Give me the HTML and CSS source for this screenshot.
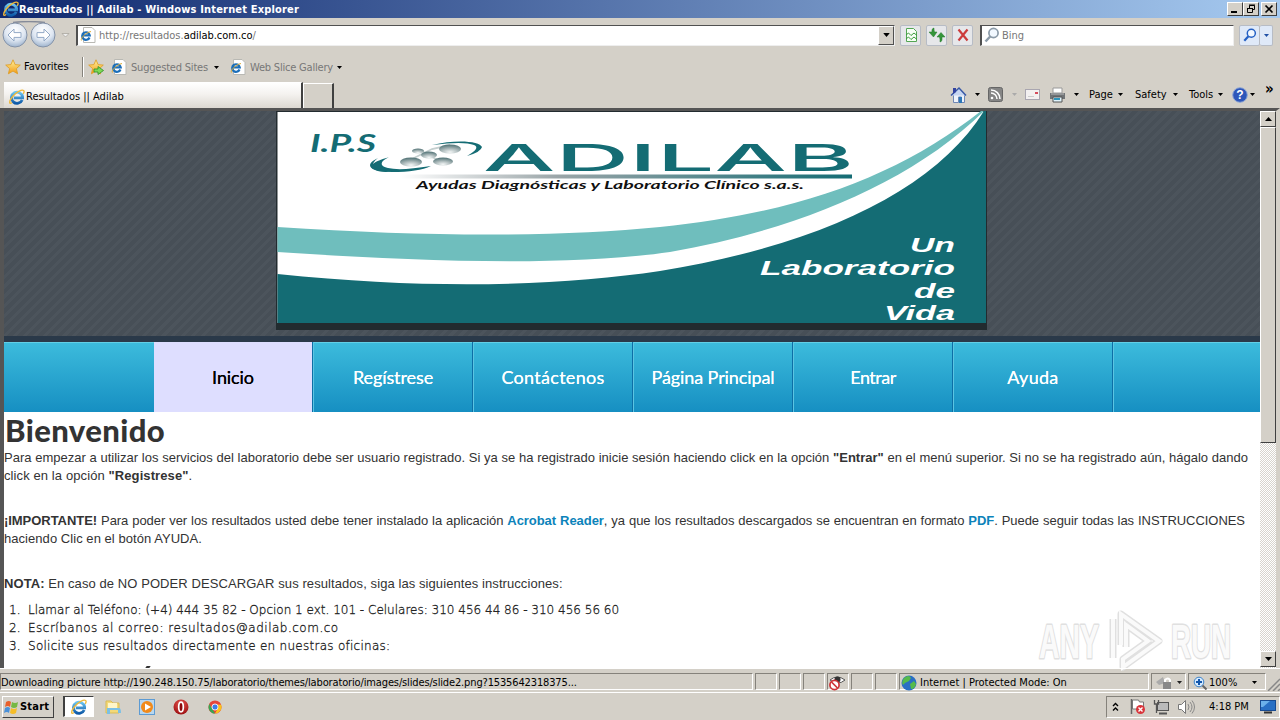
FILE: index.html
```html
<!DOCTYPE html>
<html lang="es">
<head>
<meta charset="utf-8">
<title>Resultados || Adilab</title>
<link rel="stylesheet" href="styles.css">
</head>
<body>
<svg class="defs" width="0" height="0">
  <defs>
    <linearGradient id="gBlue" x1="0" y1="0" x2="0" y2="1"><stop offset="0" stop-color="#6cc6f2"/><stop offset="1" stop-color="#0f5aa8"/></linearGradient>
    <linearGradient id="gStar" x1="0" y1="0" x2="0" y2="1"><stop offset="0" stop-color="#fff3a0"/><stop offset="1" stop-color="#f39a12"/></linearGradient>
    <radialGradient id="gBtn" cx=".5" cy=".3" r=".7"><stop offset="0" stop-color="#fff"/><stop offset=".6" stop-color="#dfe7f2"/><stop offset="1" stop-color="#9fb4ce"/></radialGradient>
    <radialGradient id="gBall" cx=".5" cy=".85" r=".8"><stop offset="0" stop-color="#f4f7f7"/><stop offset=".5" stop-color="#a9b7b8"/><stop offset="1" stop-color="#567679"/></radialGradient>
    <linearGradient id="gLine"><stop offset="0" stop-color="#fff"/><stop offset=".35" stop-color="#9aa5a8"/><stop offset="1" stop-color="#146c74"/></linearGradient>
    <radialGradient id="gRed" cx=".5" cy=".3" r=".7"><stop offset="0" stop-color="#e8574f"/><stop offset="1" stop-color="#9c0f12"/></radialGradient>
    <symbol id="ie" viewBox="0 0 16 16">
      <path d="M13.2 11A5.600 5.600 0 1 1 13.600 7.800v1H4.800" fill="none" stroke="url(#gBlue)" stroke-width="2.800"/>
      <path d="M3 13.500C-.5 16 .2 12 3.200 8 7 3 13 .2 14.600 1.400c.9.8.4 2.300-.3 3.500" fill="none" stroke="#efb93a" stroke-width="1.300"/>
    </symbol>
    <symbol id="iepage" viewBox="0 0 16 16">
      <path d="M3.500.5h8.500l3 3v12H3.500z" fill="#fff" stroke="#b9b9b4"/>
      <path d="M9.500 10.500a3.800 3.800 0 1 1 .2-2.200H2.800" fill="none" stroke="#1c6fba" stroke-width="2.200"/>
      <path d="M1.500 13.500C0 13 4 6 11 4.500" fill="none" stroke="#e0ac34" stroke-width="1"/>
    </symbol>
    <symbol id="star" viewBox="0 0 16 16"><path d="M8 .8l2.100 4.800 5.200.5-3.900 3.500 1.200 5.200L8 12.100l-4.600 2.700 1.200-5.200L.7 6.100l5.200-.5z" fill="url(#gStar)" stroke="#dd9a20" stroke-width=".8"/></symbol>
    <symbol id="tri" viewBox="0 0 5 3"><path d="M0 0h5L2.500 3z" fill="currentColor"/></symbol>
    <symbol id="lens" viewBox="0 0 16 16"><circle cx="9.500" cy="6" r="4.600" fill="#f2f8ff" stroke="currentColor" stroke-width="1.700"/><path d="M6.200 9.500L1.500 14.500" stroke="currentColor" stroke-width="2.500"/></symbol>
  </defs>
</svg>

<header class="titlebar">
  <svg class="i16" viewBox="0 0 16 16"><use href="#ie"/></svg>
  <span class="title">Resultados || Adilab - Windows Internet Explorer</span>
  <div class="winbtns">
    <i class="wbtn"><svg width="14" height="12"><path d="M3 9h6" stroke="#000" stroke-width="2"/></svg></i>
    <i class="wbtn"><svg width="14" height="12"><path d="M5.500 5V2.500h5v4h-2M5 2h6M3.500 5.500h5v4h-5zM3 5.500h6" fill="none" stroke="#000"/></svg></i>
    <i class="wbtn gap"><svg width="14" height="12"><path d="M3.500 2.500l7 7m0-7l-7 7" stroke="#000" stroke-width="1.700"/></svg></i>
  </div>
</header>

<div class="address-row">
  <svg class="navbtns" width="74" height="28" viewBox="0 0 74 28">
    <path d="M13 1.500C22 .5 36 .5 45 1.500" fill="none" stroke="#858b99" stroke-width="1.500"/>
    <circle cx="15" cy="14" r="12" fill="url(#gBtn)" stroke="#8593a8"/><circle cx="43" cy="14" r="12" fill="url(#gBtn)" stroke="#8593a8"/>
    <path d="M8 14l6-6v3.600h7v4.800h-7V20z" fill="#fff" stroke="#93a9c6"/><path d="M50 14l-6-6v3.600h-7v4.800h7V20z" fill="#fff" stroke="#93a9c6"/>
    <path d="M62 12.500h7l-3.500 3.500z" fill="#eee" stroke="#aaa69e" stroke-width=".8"/>
  </svg>
  <div class="field url"><svg class="i16" viewBox="0 0 16 16"><use href="#iepage"/></svg><span class="urltext">http://resultados.<b>adilab.com.co</b>/</span><i class="combo"><svg width="7" height="4" viewBox="0 0 5 3"><use href="#tri"/></svg></i></div>
  <div class="tool"><svg width="16" height="16"><path d="M3.500 1.500h7l3 3v10h-10z" fill="#f7fff5" stroke="#54a654"/><path d="M3 8l2.500-2 2.500 2.500L11 6l3 2.500M3 12l2.500-2 2.500 2.500 3-2.500 3 2.500" fill="none" stroke="#3c9a3c"/></svg></div>
  <div class="tool"><svg width="18" height="16"><path d="M6 1C3.500 1.500 4 4 4 5H1l4.500 5L9 5H6.500C6 3 6 2 6 1zM12 15c2.500-.5 2-3 2-5h3l-4-4.500L9 10h2.500c.6 2 .6 3 .5 5z" fill="#35953a" stroke="#247a2b" stroke-width=".5"/></svg></div>
  <div class="tool"><svg width="16" height="16"><path d="M3.500 2.500l9 11m0-11l-9 11" stroke="#cc3b3b" stroke-width="2.200"/></svg></div>
  <div class="field search"><svg class="i16 glens" viewBox="0 0 16 16"><use href="#lens"/></svg><span>Bing</span></div>
  <div class="tool go"><svg class="i14" viewBox="0 0 16 16"><use href="#lens"/></svg></div><div class="tool drop"><svg width="5" height="3"><use href="#tri"/></svg></div>
</div>

<div class="fav-row">
  <svg class="i16" viewBox="0 0 16 16"><use href="#star"/></svg><span class="favs">Favorites</span>
  <i class="vsep"></i>
  <svg class="i16 addfav" viewBox="0 0 16 16"><use href="#star"/><path d="M6 10h4V7.500l5.500 4-5.500 4V13H6z" fill="#7ed957" stroke="#2c8f25" stroke-width=".8"/></svg>
  <svg class="i16 p1" viewBox="0 0 16 16"><use href="#iepage"/></svg><span class="lnk l1">Suggested Sites</span><svg class="t1" width="5" height="3"><use href="#tri"/></svg>
  <svg class="i16 p2" viewBox="0 0 16 16"><use href="#iepage"/></svg><span class="lnk l2">Web Slice Gallery</span><svg width="5" height="3"><use href="#tri"/></svg>
</div>

<div class="tab-row">
  <div class="tab"><svg class="i16" viewBox="0 0 16 16"><use href="#ie"/></svg><span>Resultados || Adilab</span></div>
  <div class="newtab"></div>
  <div class="cmds">
    <svg width="18" height="18"><path d="M3.500 9v7.500h5V11h3v5.500h3V8" fill="#eef3fb" stroke="#6f87b5"/><path d="M1 9.500L9 2l7 7.500" fill="#c6d6f2" stroke="#3858a5" stroke-width="1.500"/><path d="M3 2h3v4L3 8z" fill="#3344a0"/><path d="M9 11h3v6H9z" fill="#2d77b8"/></svg><svg class="c1" width="5" height="3"><use href="#tri"/></svg>
    <svg class="c2" width="15" height="15"><rect x=".5" y=".5" width="14" height="14" rx="2" fill="#858585" stroke="#666"/><path d="M3 6a6 6 0 0 1 6 6M3 3a9 9 0 0 1 9 9" fill="none" stroke="#fff" stroke-width="1.500"/><circle cx="4" cy="11" r="1.300" fill="#fff"/></svg><svg class="c3 dim" width="5" height="3"><use href="#tri"/></svg>
    <svg class="c4" width="15" height="11"><rect x=".5" y=".5" width="14" height="10" fill="#f3f0f0" stroke="#a9a6b0"/><path d="M10 3h3v2h-3z" fill="#d54c5c"/><path d="M3 7.500h6" stroke="#ccc"/></svg>
    <svg class="c5" width="17" height="16"><path d="M4 1h9v5H4z" fill="#fff" stroke="#999"/><path d="M1 6h15v6H1z" fill="#6f7376"/><path d="M2 7h13" stroke="#bbb"/><path d="M4 10h9v5H4z" fill="#dff3fb" stroke="#555"/><path d="M5 12h6" stroke="#2d94ba" stroke-width="2"/></svg><svg class="c6" width="5" height="3"><use href="#tri"/></svg>
    <span class="m page">Page</span><svg width="5" height="3"><use href="#tri"/></svg>
    <span class="m safety">Safety</span><svg width="5" height="3"><use href="#tri"/></svg>
    <span class="m tools">Tools</span><svg width="5" height="3"><use href="#tri"/></svg>
    <svg class="c7" width="16" height="16"><circle cx="8" cy="8" r="7.300" fill="#2d56ba" stroke="#8da5d5"/><text x="8" y="12.300" class="help">?</text></svg><svg width="5" height="3"><use href="#tri"/></svg>
    <span class="more">»</span>
  </div>
</div>

<div class="frame">
  <main class="page-body">
    <div class="hero">
      <svg class="banner" width="711" height="219" viewBox="276 111 711 219">
        <rect x="276" y="111" width="711" height="219" fill="#222b2f"/>
        <rect x="277.500" y="112" width="708.500" height="211" fill="#fff"/>
        <path d="M277.500 227C430 237 560 237 660 227C800 213 900 175 981 111H984C908 186 790 231 670 252C560 268 400 260 277.500 252z" fill="#6fbebd"/>
        <path d="M277.500 274C430 290 560 286 660 271C820 245 935 190 984 111H986V323H277.500z" fill="#146c74"/>
        <text x="310" y="152" class="ips" textLength="66" lengthAdjust="spacingAndGlyphs">I.P.S</text>
        <path d="M390 157C369 162 361 171 392 172Q418 172 431 166Q400 171 388 168C378 166 381 160 390 157z" fill="#146c74"/>
        <path d="M378 158C361 166 374 173 392 172C372 169 369 165 378 158z" fill="#146c74"/>
        <path d="M432 145C456 139 480 141 482 147Q481 152 467 156Q481 148 474 145Q464 141 432 145z" fill="#146c74"/>
        <path d="M412 159l20-10 18-4M425 154l18 8M416 150l18 5" stroke="#c4cfcf" stroke-width="1.800" fill="none"/>
        <g fill="url(#gBall)"><ellipse cx="411" cy="162" rx="11" ry="4.500"/><ellipse cx="450" cy="149" rx="11" ry="4.500"/><ellipse cx="443" cy="161.500" rx="10" ry="4"/><ellipse cx="429" cy="155" rx="8" ry="3.500"/><ellipse cx="418" cy="151" rx="6" ry="2.500"/></g>
        <text x="483" y="171" class="brand" textLength="371" lengthAdjust="spacingAndGlyphs">ADILAB</text>
        <rect x="400" y="174.500" width="452" height="4" fill="url(#gLine)"/>
        <text x="416" y="189" class="sub" textLength="388" lengthAdjust="spacingAndGlyphs">Ayudas Diagnósticas y Laboratorio Clínico s.a.s.</text>
        <g class="slogan"><text x="910" y="252" textLength="45" lengthAdjust="spacingAndGlyphs">Un</text><text x="760" y="275" textLength="195" lengthAdjust="spacingAndGlyphs">Laboratorio</text><text x="914" y="297.500" textLength="41" lengthAdjust="spacingAndGlyphs">de</text><text x="884" y="320" textLength="71" lengthAdjust="spacingAndGlyphs">Vida</text></g>
      </svg>
    </div>
    <nav class="menu">
      <a class="on"><span>Inicio</span></a><a><span>Regístrese</span></a><a><span class="wide">Contáctenos</span></a><a><span>Página Principal</span></a><a><span class="tight">Entrar</span></a><a><span class="wide">Ayuda</span></a><i class="rest"></i>
    </nav>
    <section class="content">
      <h1>Bienvenido</h1>
      <p><span class="ln w1">Para empezar a utilizar los servicios del laboratorio debe ser usuario registrado. Si ya se ha registrado inicie sesión haciendo click en la opción <b>"Entrar"</b> en el menú superior. Si no se ha registrado aún, hágalo dando</span><span class="ln w2">click en la opción <b>"Registrese"</b>.</span></p>
      <p><span class="ln w3"><b>¡IMPORTANTE!</b> Para poder ver los resultados usted debe tener instalado la aplicación <a>Acrobat Reader</a>, ya que los resultados descargados se encuentran en formato <a>PDF</a>. Puede seguir todas las INSTRUCCIONES</span><span class="ln w4">haciendo Clic en el botón AYUDA.</span></p>
      <p class="nota"><span class="ln w5"><b>NOTA:</b> En caso de NO PODER DESCARGAR sus resultados, siga las siguientes instrucciones:</span></p>
      <div class="steps">
        <div><em>1.</em><span class="s1">Llamar al Teléfono: (+4) 444 35 82 - Opcion 1 ext. 101 - Celulares: 310 456 44 86 - 310 456 56 60</span></div>
        <div><em>2.</em><span class="s2">Escríbanos al correo: resultados@adilab.com.co</span></div>
        <div><em>3.</em><span class="s3">Solicite sus resultados directamente en nuestras oficinas:</span></div>
      </div>
      <i class="cut"></i>
    </section>
  </main>
  <aside class="scroll">
    <i class="sbtn"><svg width="7" height="4"><path d="M0 4h7L3.500 0z"/></svg></i>
    <i class="thumb"></i>
    <i class="sbtn end"><svg width="7" height="4"><path d="M0 0h7L3.500 4z"/></svg></i>
  </aside>
  <svg class="watermark" width="206" height="68" viewBox="1034 606 206 68">
    <g class="halo"><text x="1039" y="658" textLength="60" lengthAdjust="spacingAndGlyphs">ANY</text><text x="1171" y="658" textLength="60" lengthAdjust="spacingAndGlyphs">RUN</text>
    <path d="M1113 658V619M1121 645V614l38 27-36 26v-8l25-18-22-16v22"/></g>
    <path class="core" d="M1113 658V619M1121 645V614l38 27-36 26v-8l25-18-22-16v22"/>
  </svg>
</div>

<div class="status">
  <div class="cell first"><span>Downloading picture http://190.248.150.75/laboratorio/themes/laboratorio/images/slides/slide2.png?1535642318375...</span></div>
  <div class="cell s"></div><div class="cell s"></div><div class="cell s"></div>
  <div class="cell s"><svg width="20" height="17"><path d="M2 6q7-6 15 0-7 6-15 0z" fill="#fff" stroke="#555"/><circle cx="9.500" cy="5.500" r="3" fill="#333"/><circle cx="6.500" cy="11" r="4.600" fill="#fff" stroke="#cf3338" stroke-width="1.700"/><path d="M3.500 8l6 6" stroke="#cf3338" stroke-width="1.700"/></svg></div>
  <div class="cell s"></div><div class="cell s"></div>
  <div class="cell zone"><svg width="16" height="16"><circle cx="8" cy="8" r="7.500" fill="#2a6fc4"/><path d="M3 3q5-4 7 0l-2 3-4 2-2 2Q0 7 3 3zM9 9l4-3 2 3q-1 5-5 5z" fill="#56bb4b"/></svg><span>Internet | Protected Mode: On</span></div>
  <div class="cell lock"><svg width="18" height="14"><path d="M1 6l7-5 2 6-6 2z" fill="#aaa"/><path d="M10 7V4q3-3 5 0v3" fill="none" stroke="#fff" stroke-width="2"/><rect x="8" y="6" width="8" height="7" fill="#888"/></svg><svg width="5" height="3"><use href="#tri"/></svg></div>
  <div class="cell zoomc"><svg width="14" height="14"><circle cx="6" cy="6" r="4.800" fill="#d5eaff" stroke="#3e83c7"/><path d="M6 3v6M3 6h6" stroke="#1458ad" stroke-width="2"/><path d="M9.500 9.500l4 4" stroke="#666" stroke-width="2"/></svg><span>100%</span><svg width="5" height="3"><use href="#tri"/></svg></div>
  <svg class="grip" width="14" height="14"><path d="M2 14L14 2M7 14l7-7M12 14l2-2" stroke="#888" stroke-width="1.500"/></svg>
</div>

<footer class="taskbar">
  <div class="start"><svg width="16" height="16"><path d="M2 3q3-2 5 0L6 8Q4 6 1 8z" fill="#e8602c"/><path d="M8 3q3 2 6 0l-1 5q-3 2-6 0z" fill="#76b843"/><path d="M1 9q3-2 5 0l-1 5q-2-2-5 0z" fill="#4a91d9"/><path d="M7 9q3 2 6 0l-1 5q-3 2-6 0z" fill="#f5bd28"/></svg><b>Start</b></div>
  <div class="active"><svg class="i16" viewBox="0 0 16 16"><use href="#ie"/></svg></div>
  <svg class="q1" width="17" height="16"><path d="M1 2h5l2 2h6v10H1z" fill="#f3d978" stroke="#d9bb57"/><path d="M3 4h9v5H3z" fill="#fff6c8"/><path d="M2 9h12q2 0 2 5h-3v-3H5v4H2z" fill="#7bc0e5"/></svg>
  <svg class="q2" width="16" height="16"><rect x=".5" y=".5" width="15" height="15" fill="#b8d7ef" stroke="#5d9bd3"/><circle cx="8" cy="8" r="6" fill="#f18a1a"/><path d="M6 4.500v7L12 8z" fill="#fff"/></svg>
  <svg class="q3" width="16" height="16"><circle cx="8" cy="8" r="7.500" fill="url(#gRed)"/><ellipse cx="8" cy="8" rx="2.300" ry="4.800" fill="#8b090c" stroke="#fff" stroke-width="1.700"/></svg>
  <svg class="q4" width="14" height="14" viewBox="0 0 16 16"><circle cx="8" cy="8" r="7.500" fill="#e5453a"/><path d="M1.500 4.500L6 12l2 3.500A7.500 7.500 0 0 1 1.500 4.500z" fill="#36a852"/><path d="M15 5.500A7.500 7.500 0 0 1 8 15.500L12 8l-1-3z" fill="#fbc21a"/><circle cx="8" cy="8" r="3.500" fill="#3b7de9" stroke="#fff"/></svg>
  <div class="tray">
    <svg class="y1" width="7" height="10"><path d="M1 4l2.500-2.500L6 4M1 8.500L3.500 6 6 8.500" fill="none" stroke="#000" stroke-width="1.400"/></svg>
    <svg class="y2" width="17" height="17"><path d="M2.500 1v15" stroke="#666" stroke-width="1.500"/><path d="M3.500 2h6l1 2h4v7h-11z" fill="#fff" stroke="#777"/><circle cx="11.500" cy="11.500" r="4.500" fill="#d9343a"/><path d="M9.500 9.500l4 4m0-4l-4 4" stroke="#fff" stroke-width="1.400"/></svg>
    <svg class="y3" width="16" height="16"><rect x="4.500" y="3.500" width="11" height="8" fill="#bbb" stroke="#555"/><path d="M6 14.500h8" stroke="#555" stroke-width="2"/><path d="M1.500 1v4h4V1M3.500 5v9" fill="none" stroke="#555" stroke-width="1.300"/></svg>
    <svg class="y4" width="18" height="16"><path d="M1.500 5.500h3l4-4v13l-4-4h-3z" fill="#fff" stroke="#777"/><path d="M11 5q2 3 0 6M13 3q4 5 0 10M15 1.500q5 6.500 0 13" fill="none" stroke="#888"/></svg>
    <span>4:18 PM</span>
    <svg class="y5" width="16" height="14"><rect x=".5" y=".5" width="15" height="10" fill="#286fc4" stroke="#174a91"/><path d="M1 1h9L3 7H1z" fill="#6bb0ea"/><path d="M4 12.500h8" stroke="#333" stroke-width="2"/></svg>
  </div>
</footer>
</body>
</html>
```
FILE: styles.css
```css
* { box-sizing: border-box; }
body { margin: 0; width: 1280px; height: 720px; overflow: hidden; background: #d4d0c8; color: #000; font: 11px/14px "DejaVu Sans Condensed", "DejaVu Sans", sans-serif; font-stretch: condensed; display: flex; flex-direction: column; }
span, b { white-space: nowrap; }
i, em { font-style: normal; }
svg { display: block; flex: none; }
.defs { position: absolute; }
.i16 { width: 16px; height: 16px; }
.i14 { width: 14px; height: 14px; }

.titlebar { flex: none; height: 18px; display: flex; align-items: center; padding: 0 3px; background: linear-gradient(90deg, #0f286e, #a6caf0); color: #fff; font-weight: bold; }
.title { letter-spacing: .17px; padding-top: 1px; }
.winbtns { margin-left: auto; display: flex; }
.wbtn { width: 16px; height: 14px; background: #d4d0c8; border: 1px solid; border-color: #fff #404040 #404040 #fff; }
.gap { margin-left: 2px; }

.address-row { flex: none; height: 34px; display: flex; align-items: center; padding-right: 6px; }
.navbtns { margin-right: 2px; }
.field { height: 21px; background: #fff; border: 1px solid; border-color: #505050 #eee #eee #505050; border-left-width: 2px; display: flex; align-items: center; padding-left: 2px; color: #777; }
.url { width: 819px; margin-right: 5px; }
.url b { color: #000; font-weight: normal; }
.urltext { margin-left: 3px; padding-top: 2px; letter-spacing: -.02px; }
.combo { margin-left: auto; width: 16px; height: 19px; background: #d4d0c8; border: 1px solid; border-color: #fff #505050 #505050 #fff; display: flex; align-items: center; justify-content: center; color: #000; }
.tool { width: 21px; height: 21px; margin-right: 5px; border: 1px solid #b7bcc5; border-radius: 2px; background: #e6e7ea; display: flex; align-items: center; justify-content: center; }
.search { width: 254px; margin-left: 2px; margin-right: 5px; }
.search span { margin-left: 2px; padding-top: 2px; }
.glens { color: #8b9aa8; }
.go { color: #2460c4; margin-right: 0; background: #dfe9f8; }
.drop { width: 13px; margin-right: 0; border-left: 0; color: #1f4fa5; background: #dfe9f8; }

.fav-row { flex: none; height: 30px; display: flex; align-items: center; padding-left: 5px; }
.favs { margin-left: 3px; width: 58px; }
.vsep { width: 2px; height: 20px; border-left: 1px solid #85827b; border-right: 1px solid #fff; }
.addfav { margin-left: 4px; }
.p1 { margin-left: 7px; }
.p2 { margin-left: 11px; }
.lnk { color: #777; margin-left: 4px; padding-top: 1px; letter-spacing: -.2px; }
.l1 { width: 83px; }
.l2 { width: 87px; }

.tab-row { flex: none; height: 26px; display: flex; align-items: flex-end; padding-left: 4px; }
.tab { width: 299px; height: 26px; background: linear-gradient(#fff, #f4f2ef 45%, #dcd8d1); border-right: 2px solid #404040; border-top: 1px solid #fff; display: flex; align-items: center; padding: 2px 0 0 5px; }
.tab span { padding-left: 1px; }
.newtab { width: 31px; height: 25px; border-top: 1px solid #fff; border-left: 1px solid #fff; border-right: 2px solid #404040; }
.cmds { margin-left: auto; width: 330px; height: 26px; display: flex; align-items: center; padding-bottom: 1px; }
.c1 { margin-left: 7px; }
.c2 { margin-left: 8px; }
.c3 { margin-left: 9px; }
.dim { color: #aaa; }
.c4 { margin-left: 8px; }
.c5 { margin-left: 9px; }
.c6 { margin-left: 8px; }
.m { margin-left: 12px; }
.page { width: 29px; margin-left: 10px; }
.safety { width: 38px; }
.tools { width: 29px; margin-left: 11px; }
.c7 { margin-left: 9px; margin-right: 2px; }
.help { font: bold 12px "Liberation Sans", sans-serif; fill: #fff; text-anchor: middle; }
.more { font-size: 15px; font-weight: bold; margin-left: 10px; margin-bottom: 12px; }

.frame { flex: none; height: 560px; border-top: 3px solid #555; border-left: 4px solid #555; border-right: 4px solid #d4d0c8; display: flex; position: relative; background: #fff; }
.page-body { width: 1256px; height: 557px; overflow: hidden; }
.hero { height: 231px; background: repeating-linear-gradient(135deg, #474f57 0 4px, #4c545c 4px 7px); border-bottom: 6px solid #2a3949; padding-left: 272px; }
.ips { font: italic bold 24px Lato, sans-serif; fill: #146c74; }
.brand { font: 500 37px Inter, sans-serif; fill: #146c74; }
.sub { font: italic bold 12px Lato, sans-serif; fill: #111; }
.slogan { font: italic bold 20px "Liberation Sans", sans-serif; fill: #fff; }

.menu { height: 70px; display: flex; padding-left: 150px; background: linear-gradient(#3cbbdc, #168fc2); border-top: 1px solid #62cfe6; }
.menu a { width: 160px; border-left: 1px solid #5bc5e2; border-right: 1px solid #0d6fa6; color: #fff; font: 18px/70px Lato, sans-serif; text-align: center; text-shadow: 0 0 .5px #fff; margin-top: -1px; }
.menu a.on { width: 159px; background: #dedeff; color: #000; border-left: 0; text-shadow: 0 0 .5px #000; }
.menu a span { letter-spacing: -.1px; }
.menu a .wide { letter-spacing: .3px; }
.menu a .tight { letter-spacing: -.5px; }
.rest { border-left: 1px solid #5bc5e2; }

.content { font: 13px/18px "Liberation Sans", Arial, sans-serif; color: #333; }
h1 { margin: 0; padding: 0 0 1px 1px; font: 900 31px/36px Lato, sans-serif; letter-spacing: .4px; color: #333; }
p { margin: 0 0 27px; }
.ln { display: block; letter-spacing: .05px; }
.w1, .w3 { width: 1244px; letter-spacing: .01px; text-align: justify; text-align-last: justify; white-space: normal; height: 18px; }
.w3 { width: 1241px; letter-spacing: -.05px; word-spacing: -.2px; }
.content p a { color: #0c83ba; font-weight: bold; }
.w2 { letter-spacing: .1px; }
.w5 { letter-spacing: .08px; }
p.nota { margin-bottom: 8px; }
.steps { font-family: "DejaVu Sans", sans-serif; font-stretch: normal; font-size: 12px; font-weight: 200; color: #222; -webkit-text-stroke: .3px #222; }
.steps div { display: flex; }
.steps em { width: 24px; padding-left: 5px; }
.s2 { letter-spacing: .5px; }
.s3 { letter-spacing: .27px; }
.cut { display: block; width: 4px; height: 2px; background: #333; margin: 11px 0 0 142px; transform: skewX(-35deg); }

.scroll { width: 16px; height: 557px; display: flex; flex-direction: column; background: repeating-conic-gradient(#fff 0 25%, #d8d4ce 0 50%) 0 0 / 2px 2px; }
.sbtn, .thumb { width: 16px; background: #d4d0c8; border: 1px solid; border-color: #fff #404040 #404040 #fff; }
.sbtn { height: 16px; display: flex; align-items: center; justify-content: center; }
.thumb { height: 316px; }
.end { margin-top: auto; margin-bottom: 1px; }
.watermark { position: absolute; left: 1030px; top: 495px; overflow: visible; }
.halo { font: bold 49px "Liberation Sans", sans-serif; stroke-linejoin: round; fill: #fafafa; stroke: #e0e0e0; stroke-width: 3px; paint-order: stroke; }
.halo path { fill: none; stroke-width: 7px; }
.core { fill: none; stroke: #fafafa; stroke-width: 4px; }

.status { flex: none; height: 25px; border-top: 1px solid #fff; border-bottom: 1px solid #fff; padding: 4px 0 2px; display: flex; align-items: stretch; position: relative; }
.cell { border: 1px solid; border-color: #85827b #fff #fff #85827b; margin-right: 2px; display: flex; align-items: center; padding-top: 2px; }
.first { width: 753px; letter-spacing: -.14px; }
.s { width: 22px; }
.zone { width: 250px; padding-left: 1px; }
.zone span { margin-left: 3px; }
.lock { width: 35px; padding-left: 3px; gap: 4px; color: #222; }
.zoomc { width: 78px; padding-left: 4px; }
.zoomc span { width: 43px; margin-left: 2px; }
.grip { position: absolute; right: 0; bottom: 1px; }

.taskbar { flex: none; height: 26px; display: flex; align-items: center; padding: 1px 0 0 2px; }
.start { width: 52px; height: 22px; border: 1px solid; border-color: #fff #404040 #404040 #fff; display: flex; align-items: center; padding-left: 1px; }
.start b { padding-top: 1px; letter-spacing: .2px; }
.active { width: 31px; height: 21px; margin-left: 9px; background: #fff; border: 1px solid; border-color: #404040 #fff #fff #404040; border-left-width: 2px; display: flex; align-items: center; justify-content: center; }
.q1 { margin-left: 11px; }
.q2 { margin-left: 17px; }
.q3 { margin-left: 18px; }
.q4 { margin-left: 19px; }
.tray { margin-left: auto; width: 174px; height: 22px; display: flex; align-items: center; border: 1px solid; border-color: #85827b #fff #fff #85827b; padding-left: 5px; }
.y2 { margin-left: 10px; }
.y3 { margin-left: 7px; }
.y4 { margin-left: 8px; }
.tray span { margin-left: 14px; width: 43px; }
.y5 { margin-left: 8px; }
```
